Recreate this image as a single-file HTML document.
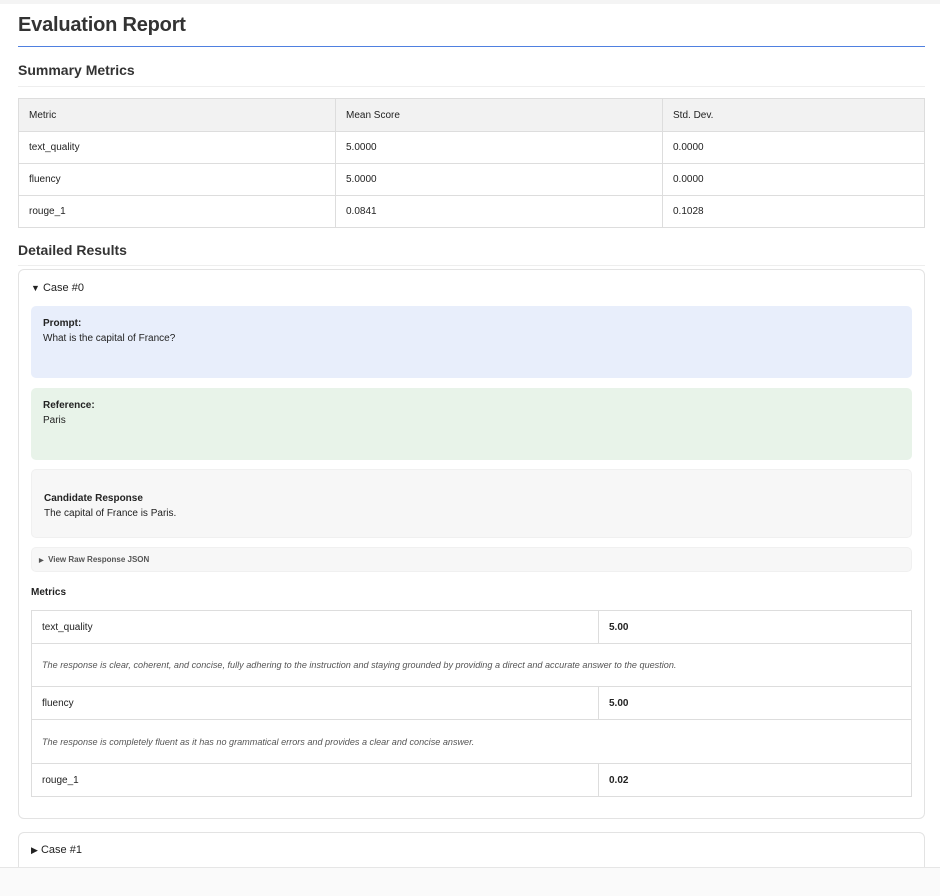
<!DOCTYPE html>
<html><head><meta charset="utf-8"><style>
*{box-sizing:border-box;margin:0;padding:0}
body{width:940px;height:896px;background:#fff;font-family:"Liberation Sans",Arial,sans-serif;color:#222;position:relative;overflow:hidden}
.a{position:absolute}
h1{position:absolute;left:18px;top:14px;font-size:20px;font-weight:bold;color:#333;letter-spacing:-0.2px}
h2{position:absolute;left:18px;font-size:14px;font-weight:bold;color:#333}
table{border-collapse:collapse;position:absolute;font-size:10px}
td{border:1px solid #ddd;padding:0 10px;vertical-align:middle}
.box{position:absolute;left:31px;width:881px;border-radius:5px;font-size:10px;padding-left:12px}
.b{font-weight:bold}
</style></head><body>
<div class="a" style="left:0;top:0;width:940px;height:4px;background:#f4f4f4"></div>
<h1>Evaluation Report</h1>
<div class="a" style="left:18px;top:46px;width:907px;height:1px;background:#4f80e0"></div>
<h2 style="top:62px">Summary Metrics</h2>
<div class="a" style="left:18px;top:86px;width:907px;height:1px;background:#eee"></div>
<table style="left:18px;top:98px;width:907px">
<tr style="height:33px;background:#f2f2f2"><td style="width:317px">Metric</td><td style="width:327px">Mean Score</td><td>Std. Dev.</td></tr>
<tr style="height:32px"><td>text_quality</td><td>5.0000</td><td>0.0000</td></tr>
<tr style="height:32px"><td>fluency</td><td>5.0000</td><td>0.0000</td></tr>
<tr style="height:32px"><td>rouge_1</td><td>0.0841</td><td>0.1028</td></tr>
</table>
<h2 style="top:242px">Detailed Results</h2>
<div class="a" style="left:18px;top:265px;width:907px;height:1px;background:#eee"></div>
<div class="a" style="left:18px;top:269px;width:907px;height:550px;border:1px solid #e3e3e3;border-radius:6px"></div>
<div class="a" style="left:31px;top:282px;font-size:11px;color:#222"><span style="font-size:9px">&#9660;</span> Case #0</div>
<div class="box" style="top:306px;height:72px;background:#e8eefb"><div style="margin-top:12px" class="b">Prompt:</div><div style="margin-top:4px">What is the capital of France?</div></div>
<div class="box" style="top:388px;height:72px;background:#e8f3e9"><div style="margin-top:12px" class="b">Reference:</div><div style="margin-top:4px">Paris</div></div>
<div class="box" style="top:469px;height:69px;background:#f7f7f7;border:1px solid #f0f0f0"><div style="margin-top:23px" class="b">Candidate Response</div><div style="margin-top:4px">The capital of France is Paris.</div></div>
<div class="box" style="top:547px;height:25px;background:#f7f7f7;border:1px solid #f0f0f0;font-size:8px;color:#555;font-weight:bold;line-height:24px;padding-left:7px"><span style="font-size:6px">&#9654;</span>&nbsp; View Raw Response JSON</div>
<div class="a b" style="left:31px;top:587px;font-size:10px">Metrics</div>
<table style="left:31px;top:610px;width:881px">
<tr style="height:33px"><td style="width:567px">text_quality</td><td class="b">5.00</td></tr>
<tr style="height:43px"><td colspan="2" style="font-style:italic;font-size:9.1px;color:#555">The response is clear, coherent, and concise, fully adhering to the instruction and staying grounded by providing a direct and accurate answer to the question.</td></tr>
<tr style="height:33px"><td>fluency</td><td class="b">5.00</td></tr>
<tr style="height:44px"><td colspan="2" style="font-style:italic;font-size:9.1px;color:#555">The response is completely fluent as it has no grammatical errors and provides a clear and concise answer.</td></tr>
<tr style="height:33px"><td>rouge_1</td><td class="b">0.02</td></tr>
</table>
<div class="a" style="left:18px;top:832px;width:907px;height:60px;border:1px solid #e3e3e3;border-radius:6px"></div>
<div class="a" style="left:31px;top:844px;font-size:11px"><span style="font-size:9px">&#9654;</span> Case #1</div>
<div class="a" style="left:0;top:867px;width:940px;height:29px;background:#fafafa;border-top:1px solid #e6e6e6"></div>
</body></html>
